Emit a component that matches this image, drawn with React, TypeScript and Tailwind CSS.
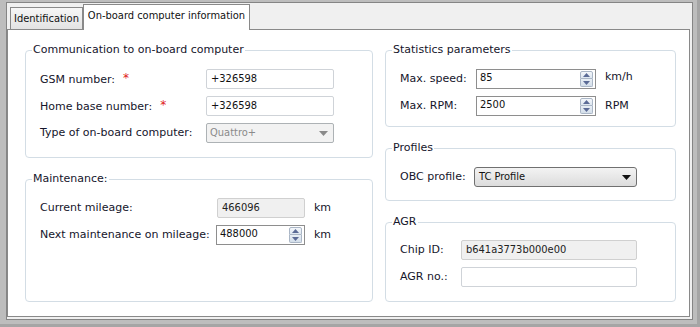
const LABEL = "[font-family:'DejaVu_Sans',sans-serif] text-[11px] text-[#15152b]";
const FIELD = "[font-family:'DejaVu_Sans_Condensed','DejaVu_Sans',sans-serif] [font-stretch:condensed] text-[11px]";

const Group = ({ title, className = "", children }: { title: string; className?: string; children: React.ReactNode }) => (
  <fieldset className={`border border-[#d3dde5] rounded-[4px] min-w-0 ${className}`}>
    <legend className={`${LABEL} ml-[6px] px-[1px] leading-[14px] text-[#111]`}>{title}</legend>
    {children}
  </fieldset>
);

const Spinner = () => (
  <div className="ml-auto mr-[2px] w-[13px] h-[16px] flex flex-col">
    <div className="h-[8px] border border-[#aab6c6] rounded-t-[2px] bg-gradient-to-b from-[#f4f7fb] to-[#dde6f0] flex items-center justify-center">
      <svg width="7" height="4" viewBox="0 0 7 4"><path d="M3.5 0 L7 4 L0 4 Z" fill="#5b6b96" /></svg>
    </div>
    <div className="h-[8px] border border-t-0 border-[#aab6c6] rounded-b-[2px] bg-gradient-to-b from-[#e8eef5] to-[#d4dfea] flex items-center justify-center">
      <svg width="7" height="4" viewBox="0 0 7 4"><path d="M0 0 L7 0 L3.5 4 Z" fill="#5b6b96" /></svg>
    </div>
  </div>
);

const Text = ({ value, w, disabled = false }: { value: string; w: string; disabled?: boolean }) => (
  <div
    className={`${FIELD} ${w} h-[20px] flex items-center pl-[4px] rounded-[2px] border ${
      disabled ? "bg-[#f0f0f0] border-[#d0d0d0] text-[#222]" : "bg-white border-[#cfd3d8] text-[#111]"
    }`}
  >
    {value}
  </div>
);

const Spin = ({ value, w }: { value: string; w: string }) => (
  <div className={`${FIELD} ${w} h-[20px] flex items-center pl-[3px] border border-[#8e8e8e] bg-white text-[#111]`}>
    <span className="-mt-[1px]">{value}</span>
    <Spinner />
  </div>
);

const Star = () => <span className="text-[#e02020] ml-[8px] text-[12px] relative -top-[1px]">*</span>;

export default function App() {
  return (
    <div className="w-[700px] h-[327px] bg-[#a5a5a5]">
      <div className="w-[697px] h-[324px] bg-[#bdbdbd] pt-[2px] pl-[6px] pr-[4px] pb-[4px]">
        <div className="h-full border border-[#858585] bg-[#f0f0f0] flex flex-col pr-[2px] pb-[2px]">
          {/* tabs */}
          <div className="h-[26px] flex items-end pl-[3px] shrink-0">
            <div className={`${FIELD} relative z-10 -mb-px h-[23px] w-[73px] border border-[#898989] bg-gradient-to-b from-[#f6f6f6] to-[#e3e3e3] flex items-center justify-center pt-[2px] text-[#111]`}>
              Identification
            </div>
            <div className={`${FIELD} relative z-10 -mb-px h-[26px] w-[167px] border border-b-0 border-[#898989] bg-white flex items-center justify-center pb-[2px] text-[#111]`}>
              On-board computer information
            </div>
          </div>
          {/* pane */}
          <div className="flex-1 bg-white border border-[#898989] flex pl-[17px] pr-[13px] pt-[13px] pb-[14px] gap-[12px]">
            {/* left column */}
            <div className="w-[348px] flex flex-col">
              <Group title="Communication to on-board computer">
                <div className="pl-[14px] pt-[12px] pb-[14px] flex flex-col gap-[7px]">
                  <div className="flex items-center h-[20px]">
                    <div className={`${LABEL} w-[166px]`}>GSM number:<Star /></div>
                    <Text value="+326598" w="w-[128px]" />
                  </div>
                  <div className="flex items-center h-[20px]">
                    <div className={`${LABEL} w-[166px]`}>Home base number:<Star /></div>
                    <Text value="+326598" w="w-[128px]" />
                  </div>
                  <div className="flex items-center h-[20px]">
                    <div className={`${LABEL} w-[166px]`}>Type of on-board computer:</div>
                    <div className={`${FIELD} w-[128px] h-[20px] flex items-center pl-[3px] pr-[5px] rounded-[2px] border border-[#adb2b5] bg-[#f2f2f2] text-[#8a8a8a]`}>
                      Quattro+
                      <svg className="ml-auto" width="9" height="5" viewBox="0 0 9 5"><path d="M0 0 L9 0 L4.5 5 Z" fill="#8a8a8a" /></svg>
                    </div>
                  </div>
                </div>
              </Group>
              <Group title="Maintenance:" className="mt-[14px] flex-1">
                <div className="pl-[14px] pt-[12px] flex flex-col gap-[7px]">
                  <div className="flex items-center h-[20px]">
                    <div className={`${LABEL} w-[177px]`}>Current mileage:</div>
                    <Text value="466096" w="w-[88px]" disabled />
                    <div className={`${LABEL} ml-[9px]`}>km</div>
                  </div>
                  <div className="flex items-center h-[20px]">
                    <div className={`${LABEL} w-[176px]`}>Next maintenance on mileage:</div>
                    <Spin value="488000" w="w-[89px]" />
                    <div className={`${LABEL} ml-[9px]`}>km</div>
                  </div>
                </div>
              </Group>
            </div>
            {/* right column */}
            <div className="w-[291px] flex flex-col">
              <Group title="Statistics parameters">
                <div className="pl-[14px] pt-[12px] pb-[10px] flex flex-col gap-[7px]">
                  <div className="flex items-center h-[20px]">
                    <div className={`${LABEL} w-[76px]`}>Max. speed:</div>
                    <Spin value="85" w="w-[120px]" />
                    <div className={`${LABEL} ml-[9px] -mt-[3px]`}>km/h</div>
                  </div>
                  <div className="flex items-center h-[20px]">
                    <div className={`${LABEL} w-[76px]`}>Max. RPM:</div>
                    <Spin value="2500" w="w-[120px]" />
                    <div className={`${LABEL} ml-[9px]`}>RPM</div>
                  </div>
                </div>
              </Group>
              <Group title="Profiles" className="mt-[14px]">
                <div className="pl-[14px] pt-[12px] pb-[13px]">
                  <div className="flex items-center h-[20px]">
                    <div className={`${LABEL} w-[74px]`}>OBC profile:</div>
                    <div className={`${FIELD} w-[163px] h-[20px] flex items-center pl-[4px] pr-[5px] rounded-[3px] border border-[#707070] bg-gradient-to-b from-[#f3f3f3] to-[#dcdcdc] text-[#111]`}>
                      TC Profile
                      <svg className="ml-auto" width="9" height="5" viewBox="0 0 9 5"><path d="M0 0 L9 0 L4.5 5 Z" fill="#111" /></svg>
                    </div>
                  </div>
                </div>
              </Group>
              <Group title="AGR" className="mt-[14px] flex-1">
                <div className="pl-[14px] pt-[11px] pb-[11px] flex flex-col gap-[7px]">
                  <div className="flex items-center h-[20px]">
                    <div className={`${LABEL} w-[61px]`}>Chip ID:</div>
                    <Text value="b641a3773b000e00" w="w-[176px]" disabled />
                  </div>
                  <div className="flex items-center h-[20px]">
                    <div className={`${LABEL} w-[61px]`}>AGR no.:</div>
                    <Text value="" w="w-[176px]" />
                  </div>
                </div>
              </Group>
            </div>
          </div>
        </div>
      </div>
    </div>
  );
}
